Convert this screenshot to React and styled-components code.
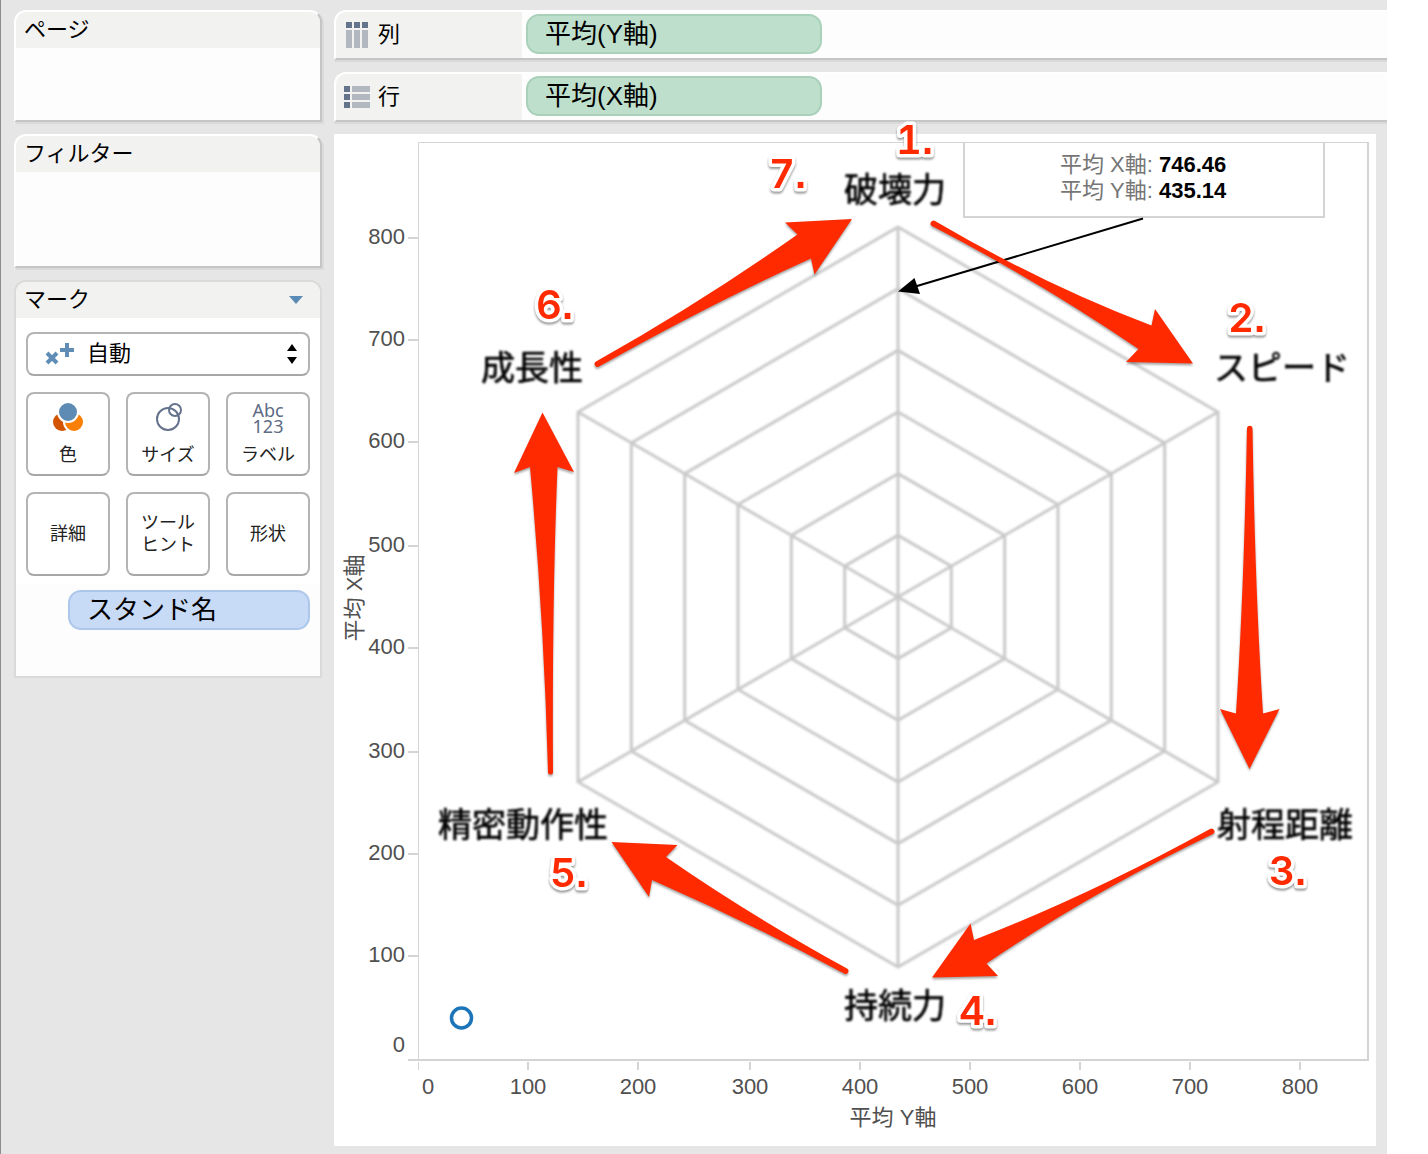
import { useState } from 'react';
import styled, { createGlobalStyle } from 'styled-components';

const X_TICKS = [[528, 100], [638, 200], [750, 300], [860, 400], [970, 500], [1080, 600], [1190, 700], [1300, 800]];
const Y_TICKS = [[238, 800], [340, 700], [442, 600], [546, 500], [648, 400], [752, 300], [854, 200], [956, 100]];

const CENTER = { x: 898, y: 597 };
const RADIUS = { x: 320, y: 185 };
const RINGS = [1, 2, 3, 4, 5, 6];

const STATS = [
  { name: '破壊力', x: 895, y: 202 },
  { name: 'スピード', x: 1282, y: 380 },
  { name: '射程距離', x: 1285, y: 837 },
  { name: '持続力', x: 895, y: 1018 },
  { name: '精密動作性', x: 523, y: 837 },
  { name: '成長性', x: 532, y: 380 },
];

const STEPS = [
  { label: '1', x: 896, y: 154 },
  { label: '2', x: 1228, y: 332 },
  { label: '3', x: 1269, y: 885 },
  { label: '4', x: 959, y: 1025 },
  { label: '5', x: 550, y: 887 },
  { label: '6', x: 536, y: 319 },
  { label: '7', x: 769, y: 188 },
];

const ARROWS = [
  'M935 221Q1046 286 1151.500 325.500L1155 309L1193 363.500L1126 362L1138.500 349Q1040 282 932 226A2.800 2.800 0 0 1 935 221Z',
  'M1252.500 428Q1255 590 1263 713.500L1279.500 709L1249.500 769L1220 709L1236 713.500Q1244 590 1247 428A2.800 2.800 0 0 1 1252.500 428Z',
  'M1213 834Q1090 893 986.500 963.500L998 976L932 977.500L970.500 923.500L974 940Q1090 895 1210 829A2.800 2.800 0 0 1 1213 834Z',
  'M844 973.500Q748 922 652 880L649 897L611.500 842L677.500 845L666 857Q748 914 847 968.500A2.800 2.800 0 0 1 844 973.500Z',
  'M548 772Q544 620 530 467L514 473L542.500 412.500L574 472L557.500 467Q552 600 553 772A2.500 2.500 0 0 1 548 772Z',
  'M596 361.500Q700 303 797.500 234.500L785 222.500L852 219L814.500 274.500L811 258.500Q712 303 599 366.500A2.800 2.800 0 0 1 596 361.500Z',
];

function hexagon(step) {
  const rx = (RADIUS.x * step) / 6;
  const ry = (RADIUS.y * step) / 6;
  const { x, y } = CENTER;
  return [
    [x, y - ry * 2],
    [x + rx, y - ry],
    [x + rx, y + ry],
    [x, y + ry * 2],
    [x - rx, y + ry],
    [x - rx, y - ry],
  ];
}

function ColumnsIcon() {
  return (
    <svg width="26" height="26" viewBox="0 0 26 26" aria-hidden="true">
      <path fill="#64748b" d="M2 0h6v6H2zM10 0h6v6h-6zM18 0h6v6h-6z" />
      <path fill="#b1b8c0" d="M2 8h6v18H2zM10 8h6v18h-6zM18 8h6v18h-6z" />
    </svg>
  );
}

function RowsIcon() {
  return (
    <svg width="26" height="26" viewBox="0 0 26 26" aria-hidden="true">
      <path fill="#64748b" d="M0 2h6v6H0zM0 10h6v6H0zM0 18h6v6H0z" />
      <path fill="#b1b8c0" d="M8 2h18v6H8zM8 10h18v6H8zM8 18h18v6H8z" />
    </svg>
  );
}

function AutoIcon() {
  return (
    <svg width="30" height="24" viewBox="0 0 30 24" aria-hidden="true">
      <path stroke="#608db6" strokeWidth="4" d="M22 1v14M15 8h14M2 11l10 10M12 11L2 21" />
    </svg>
  );
}

function StepperIcon() {
  return (
    <svg width="10" height="20" viewBox="0 0 10 20" aria-hidden="true">
      <path d="M5 0l5 7H0zM5 20l5-7H0z" />
    </svg>
  );
}

function ColorIcon() {
  return (
    <svg width="32" height="32" viewBox="0 0 32 32" aria-hidden="true">
      <circle cx="10" cy="20" r="9" fill="#d35400" />
      <circle cx="22" cy="20" r="10" fill="#fa7f05" stroke="#fff" strokeWidth="2" />
      <circle cx="16" cy="10" r="10" fill="#5e8bb3" stroke="#fff" strokeWidth="2" />
    </svg>
  );
}

function SizeIcon() {
  return (
    <svg width="32" height="32" viewBox="0 0 32 32" fill="none" stroke="#64728c" strokeWidth="2" aria-hidden="true">
      <circle cx="16" cy="17" r="11" />
      <circle cx="23" cy="8" r="6" />
    </svg>
  );
}

function StandChart() {
  return (
    <Chart viewBox="334 134 1042 1012" role="img" aria-label="平均 X軸 / 平均 Y軸">
      <defs>
        <filter id="soft" x="-5%" y="-5%" width="110%" height="110%">
          <feGaussianBlur stdDeviation="0.8" />
        </filter>
      </defs>

      <g filter="url(#soft)">
        <g fill="none" stroke="#cacaca" strokeWidth="3">
          {RINGS.map(step => (
            <polygon key={step} points={hexagon(step).join(' ')} />
          ))}
          {hexagon(6).map(([x, y]) => (
            <path key={`${x}-${y}`} d={`M${CENTER.x} ${CENTER.y}L${x} ${y}`} />
          ))}
        </g>
        {STATS.map(stat => (
          <StatText key={stat.name} x={stat.x} y={stat.y} textAnchor="middle">{stat.name}</StatText>
        ))}
      </g>

      {Y_TICKS.map(([y, value]) => (
        <AxisText key={value} x="405" y={y + 6} textAnchor="end">{value}</AxisText>
      ))}
      <AxisText x="405" y="1052" textAnchor="end">0</AxisText>
      <AxisText x="428" y="1094" textAnchor="middle">0</AxisText>
      {X_TICKS.map(([x, value]) => (
        <AxisText key={value} x={x} y="1094" textAnchor="middle">{value}</AxisText>
      ))}
      <AxisText x="893" y="1125" textAnchor="middle">平均 Y軸</AxisText>
      <AxisText transform="translate(362 598) rotate(-90)" textAnchor="middle">平均 X軸</AxisText>

      <circle cx="461.500" cy="1018" r="10" fill="#fff" stroke="#1c75b8" strokeWidth="3.500" />

      <path d="M964 142V217H1324V142" fill="#fff" stroke="#d4d4d4" strokeWidth="2" />
      <NoteText x="1060" y="172">平均 X軸: <tspan>746.46</tspan></NoteText>
      <NoteText x="1060" y="198">平均 Y軸: <tspan>435.14</tspan></NoteText>
      <path d="M1143 218.500L912 287.500" stroke="#000" strokeWidth="2" />
      <path d="M898 291.500L914.500 278L920 294Z" />

      <g stroke="#d4d4d4" strokeWidth="2" fill="none">
        <path strokeWidth="1" d="M418.500 1070V1062M418.500 1059V142.500H1368" />
        <path d="M1368 142V1060H408" />
        {Y_TICKS.map(([y]) => <path key={y} d={`M408 ${y}H418`} />)}
        {X_TICKS.map(([x]) => <path key={x} d={`M${x} 1062V1070`} />)}
      </g>

      {ARROWS.map(d => <Arrow key={d} d={d} />)}
      {STEPS.map(step => (
        <StepText key={step.label} x={step.x} y={step.y}>{step.label}<tspan>.</tspan></StepText>
      ))}
    </Chart>
  );
}

export default function App() {
  const [mark, setMark] = useState('auto');

  return (
    <>
      <GlobalStyle />
      <Screen>
        <Workspace>
          <Sidebar>
            <Card>
              <CardHeader><h2>ページ</h2></CardHeader>
              <DropArea size={72} />
            </Card>
            <Card>
              <CardHeader><h2>フィルター</h2></CardHeader>
              <DropArea size={94} />
            </Card>
            <Card flat>
              <CardHeader>
                <h2>マーク</h2>
                <MenuButton aria-label="マークのメニュー">
                  <svg width="14" height="8" viewBox="0 0 14 8" aria-hidden="true">
                    <path fill="#5b8bb5" d="M0 0h14L7 8z" />
                  </svg>
                </MenuButton>
              </CardHeader>
              <MarkControls>
                <MarkSelect>
                  <AutoIcon />
                  <select aria-label="マークの種類" value={mark} onChange={e => setMark(e.target.value)}>
                    <option value="auto">自動</option>
                  </select>
                  <StepperIcon />
                </MarkSelect>
                <MarkGrid>
                  <MarkButton><ColorIcon />色</MarkButton>
                  <MarkButton><SizeIcon />サイズ</MarkButton>
                  <MarkButton>
                    <LabelIcon aria-hidden="true">Abc<br />123</LabelIcon>
                    ラベル
                  </MarkButton>
                  <MarkButton>詳細</MarkButton>
                  <MarkButton><span>ツール<br />ヒント</span></MarkButton>
                  <MarkButton>形状</MarkButton>
                </MarkGrid>
              </MarkControls>
              <MarkFields>
                <Pill dimension>スタンド名</Pill>
              </MarkFields>
            </Card>
          </Sidebar>

          <Main>
            <Shelf>
              <ShelfLabel><ColumnsIcon /><h2>列</h2></ShelfLabel>
              <Pill>平均(Y軸)</Pill>
            </Shelf>
            <Shelf>
              <ShelfLabel><RowsIcon /><h2>行</h2></ShelfLabel>
              <Pill>平均(X軸)</Pill>
            </Shelf>
            <View>
              <StandChart />
            </View>
          </Main>
        </Workspace>
      </Screen>
    </>
  );
}

const GlobalStyle = createGlobalStyle`
  * {
    box-sizing: border-box;
  }
  body {
    margin: 0;
    background: #fff;
    color: #000;
    font-family: 'Liberation Sans', 'Noto Sans CJK JP', sans-serif;
    font-size: 22px;
    line-height: 26px;
  }
  h2 {
    margin: 0;
    font-size: 22px;
    font-weight: 400;
  }
  button, select {
    font: inherit;
    color: inherit;
  }
  svg {
    flex: none;
  }
`;

const Screen = styled.div`
  padding-right: 41px;
`;

const Workspace = styled.div`
  display: flex;
  align-items: flex-start;
  gap: 12px;
  min-height: 100vh;
  padding: 10px 0 8px 13px;
  background: #e6e6e6;
  border-left: 1px solid #8c8c8c;
`;

const Sidebar = styled.aside`
  display: flex;
  flex-direction: column;
  flex: none;
  gap: 12px;
  width: 308px;
`;

const Card = styled.section.withConfig({ shouldForwardProp: prop => prop !== 'flat' })`
  overflow: hidden;
  background: #fdfdfd;
  border: 2px solid;
  border-color: ${({ flat }) => flat ? '#dadada' : '#fff #c5c5c5 #c5c5c5 #fff'};
  border-radius: 12px 12px 0 0;
  box-shadow: ${({ flat }) => flat ? 'none' : '2px 2px 0 #dadada'};
`;

const CardHeader = styled.header`
  display: flex;
  align-items: center;
  justify-content: space-between;
  height: 36px;
  padding: 0 17px 0 8px;
  background: #f2f2f0;
`;

const DropArea = styled.div`
  min-height: ${({ size }) => size}px;
`;

const MenuButton = styled.button`
  display: flex;
  padding: 0;
  border: 0;
  background: none;
`;

const MarkControls = styled.div`
  display: flex;
  flex-direction: column;
  gap: 16px;
  padding: 14px 10px 8px;
  background: #fff;
`;

const MarkSelect = styled.label`
  display: flex;
  align-items: center;
  gap: 12px;
  height: 44px;
  padding: 0 11px 0 17px;
  background: #fff;
  border: 2px solid #b4b4b4;
  border-bottom-color: #a6a6a6;
  border-radius: 8px;
  select {
    flex: 1;
    min-width: 0;
    padding: 0;
    border: 0;
    background: none;
    appearance: none;
  }
`;

const MarkGrid = styled.div`
  display: grid;
  grid-template-columns: repeat(3, 1fr);
  gap: 16px;
`;

const MarkButton = styled.button`
  display: flex;
  flex-direction: column;
  align-items: center;
  justify-content: center;
  gap: 10px;
  height: 84px;
  padding: 0;
  background: #fff;
  border: 2px solid #b4b4b4;
  border-bottom-color: #a6a6a6;
  border-radius: 8px;
  color: #222;
  font-size: 18px;
  line-height: 22px;
`;

const LabelIcon = styled.span`
  color: #5d6b85;
  font-family: 'Noto Sans', sans-serif;
  line-height: 16px;
`;

const MarkFields = styled.div`
  display: flex;
  flex-direction: column;
  min-height: 92px;
  padding: 6px 10px 0 52px;
`;

const Pill = styled.button.withConfig({ shouldForwardProp: prop => prop !== 'dimension' })`
  width: ${({ dimension }) => dimension ? 'auto' : '296px'};
  height: 40px;
  padding: 0 17px;
  background: ${({ dimension }) => dimension ? '#c7daf6' : '#bedfcc'};
  border: 2px solid ${({ dimension }) => dimension ? '#adc7eb' : '#a9d0b9'};
  border-radius: 13px;
  font-size: 26px;
  line-height: 32px;
  text-align: left;
`;

const Main = styled.main`
  display: flex;
  flex-direction: column;
  flex: 1;
  gap: 12px;
  min-width: 0;
`;

const Shelf = styled.section`
  display: flex;
  align-items: center;
  gap: 4px;
  height: 50px;
  background: #fdfdfd;
  border: 2px solid #fff;
  border-right: 0;
  border-bottom-color: #c5c5c5;
  border-radius: 12px 0 0 0;
  box-shadow: 0 2px 0 #dadada;
  ${Pill} {
    margin-bottom: 2px;
  }
`;

const ShelfLabel = styled.div`
  display: flex;
  align-items: center;
  gap: 8px;
  width: 186px;
  height: 46px;
  padding-left: 8px;
  background: #f2f2f0;
  border-radius: 10px 0 0 0;
`;

const View = styled.section`
  margin-right: 11px;
  background: #fff;
`;

const Chart = styled.svg`
  display: block;
  width: 100%;
  height: auto;
  overflow: visible;
`;

const AxisText = styled.text`
  fill: #505050;
  font-size: 22px;
`;

const StatText = styled.text`
  fill: #000;
  stroke: #000;
  stroke-width: 0.6px;
  font-family: 'Noto Sans CJK JP', sans-serif;
  font-size: 34px;
`;

const NoteText = styled.text`
  fill: #767676;
  font-size: 22px;
  tspan {
    fill: #000;
    font-weight: 700;
  }
`;

const Arrow = styled.path`
  fill: #ff2a00;
  filter: drop-shadow(0 2px 1px rgba(0, 0, 0, 0.35));
`;

const StepText = styled.text`
  fill: #ff2a00;
  stroke: #fff;
  stroke-width: 7px;
  stroke-linejoin: round;
  paint-order: stroke;
  font-family: Inter, sans-serif;
  font-size: 40px;
  font-weight: 600;
  font-variant-numeric: tabular-nums;
  filter: drop-shadow(0 2px 1px rgba(0, 0, 0, 0.4));
  tspan {
    font-family: 'Liberation Sans', sans-serif;
  }
`;
